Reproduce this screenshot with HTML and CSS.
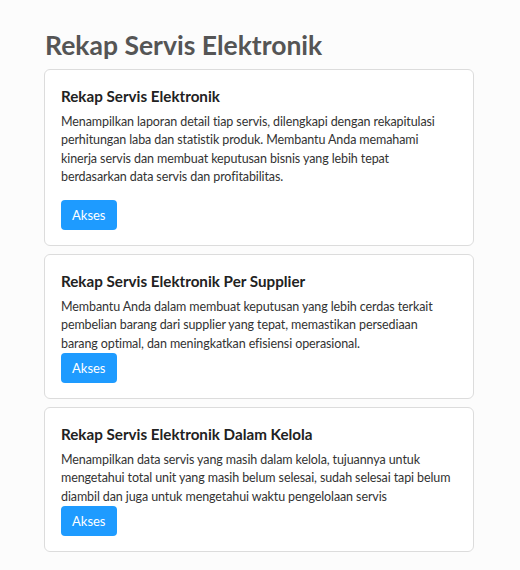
FILE: index.html
```html
<!DOCTYPE html>
<html lang="id">
<head>
    <meta charset="UTF-8">
    <meta name="viewport" content="width=device-width, initial-scale=1.0">
    <title>Rekap Servis Elektronik</title>
    <link rel="stylesheet" href="styles.css">
</head>
<body>
    <div class="container">
        <h1 class="page-title">Rekap Servis Elektronik</h1>

        <div class="card">
            <h2 class="card-title">Rekap Servis Elektronik</h2>
            <p class="card-text spaced">Menampilkan laporan detail tiap servis, dilengkapi dengan rekapitulasi perhitungan laba dan statistik produk. Membantu Anda memahami kinerja servis dan membuat keputusan bisnis yang lebih tepat berdasarkan data servis dan profitabilitas.</p>
            <a class="btn" href="#">Akses</a>
        </div>

        <div class="card">
            <h2 class="card-title">Rekap Servis Elektronik Per Supplier</h2>
            <p class="card-text">Membantu Anda dalam membuat keputusan yang lebih cerdas terkait pembelian barang dari supplier yang tepat, memastikan persediaan barang optimal, dan meningkatkan efisiensi operasional.</p>
            <a class="btn" href="#">Akses</a>
        </div>

        <div class="card">
            <h2 class="card-title">Rekap Servis Elektronik Dalam Kelola</h2>
            <p class="card-text">Menampilkan data servis yang masih dalam kelola, tujuannya untuk mengetahui total unit yang masih belum selesai, sudah selesai tapi belum diambil dan juga untuk mengetahui waktu pengelolaan servis</p>
            <a class="btn" href="#">Akses</a>
        </div>
    </div>
</body>
</html>
```

FILE: styles.css
```css
body {
    margin: 0;
    background: #fcfcfc;
    font-family: 'Lato', sans-serif;
    color: #212529;
}

.container {
    width: 430px;
    margin-left: 44px;
    padding-top: 29px;
    display: flex;
    flex-direction: column;
    gap: 8px;
}

.page-title {
    margin: 0 0 0 1px;
    font-size: 26.5px;
    font-weight: 700;
    line-height: 32px;
    color: #555;
}

.card {
    background: #fff;
    border: 1px solid #dcdcdc;
    border-radius: 6px;
    padding: 15px 16px 15px;
}

.card-title {
    margin: 0 0 6px;
    font-size: 15.2px;
    font-weight: 700;
    line-height: 22px;
    color: #222;
}

.card-text {
    margin: 0;
    font-size: 12.5px;
    line-height: 18.3px;
    letter-spacing: -0.1px;
    color: #333;
}

.card-text.spaced {
    margin-bottom: 14px;
}

.btn {
    display: inline-block;
    padding: 0 11px;
    height: 30px;
    line-height: 30px;
    background: #1e9bff;
    color: #fff;
    font-size: 13px;
    text-decoration: none;
    border-radius: 4px;
}
```
